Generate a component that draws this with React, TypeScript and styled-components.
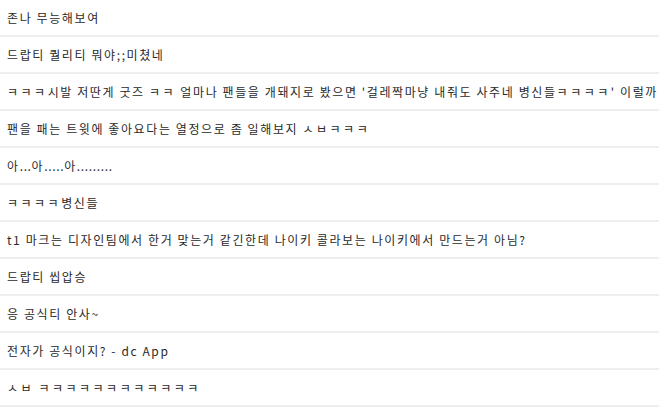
import React from "react";
import styled, { createGlobalStyle } from "styled-components";

const Global = createGlobalStyle`
  html, body { margin: 0; padding: 0; background: #fff; }
  body { font-family: "Noto Sans CJK KR", "Noto Sans", sans-serif; }
`;

const List = styled.ul`
  list-style: none;
  margin: 0;
  padding: 0;
  width: 659px;
`;

const Row = styled.li`
  height: 35px;
  border-bottom: 2px solid #eeeeee;
  display: flex;
  align-items: center;
  padding-left: 7px;
  font-size: 12px;
  letter-spacing: 1.6px;
  color: #2a2a2a;
  white-space: nowrap;
  overflow: hidden;
`;

const Run = styled.span<{ $kind: "jamo" | "dots" }>`
  letter-spacing: ${(p) => (p.$kind === "jamo" ? "2.5px" : "0.65px")};
`;

const comments = [
  "존나 무능해보여",
  "드랍티 퀄리티 뭐야;;미쳤네",
  "ㅋㅋㅋ시발 저딴게 굿즈 ㅋㅋ 얼마나 팬들을 개돼지로 봤으면 '걸레짝마냥 내줘도 사주네 병신들ㅋㅋㅋㅋ' 이럴까",
  "팬을 패는 트윗에 좋아요다는 열정으로 좀 일해보지 ㅅㅂㅋㅋㅋ",
  "아...아.....아.........",
  "ㅋㅋㅋㅋ병신들",
  "t1 마크는 디자인팀에서 한거 맞는거 같긴한데 나이키 콜라보는 나이키에서 만드는거 아님?",
  "드랍티 씹압승",
  "응 공식티 안사~",
  "전자가 공식이지? - dc App",
  "ㅅㅂ ㅋㅋㅋㅋㅋㅋㅋㅋㅋㅋㅋㅋ",
];

function renderText(text: string) {
  const parts = text.split(/([\u3131-\u318E]+|\.{2,})/);
  return parts.map((p, i) => {
    if (/^[\u3131-\u318E]+$/.test(p)) return <Run key={i} $kind="jamo">{p}</Run>;
    if (/^\.{2,}$/.test(p)) return <Run key={i} $kind="dots">{p}</Run>;
    return p;
  });
}

export default function App() {
  return (
    <>
      <Global />
      <List>
        {comments.map((c, i) => (
          <Row key={i}>
            <span>{renderText(c)}</span>
          </Row>
        ))}
      </List>
    </>
  );
}
